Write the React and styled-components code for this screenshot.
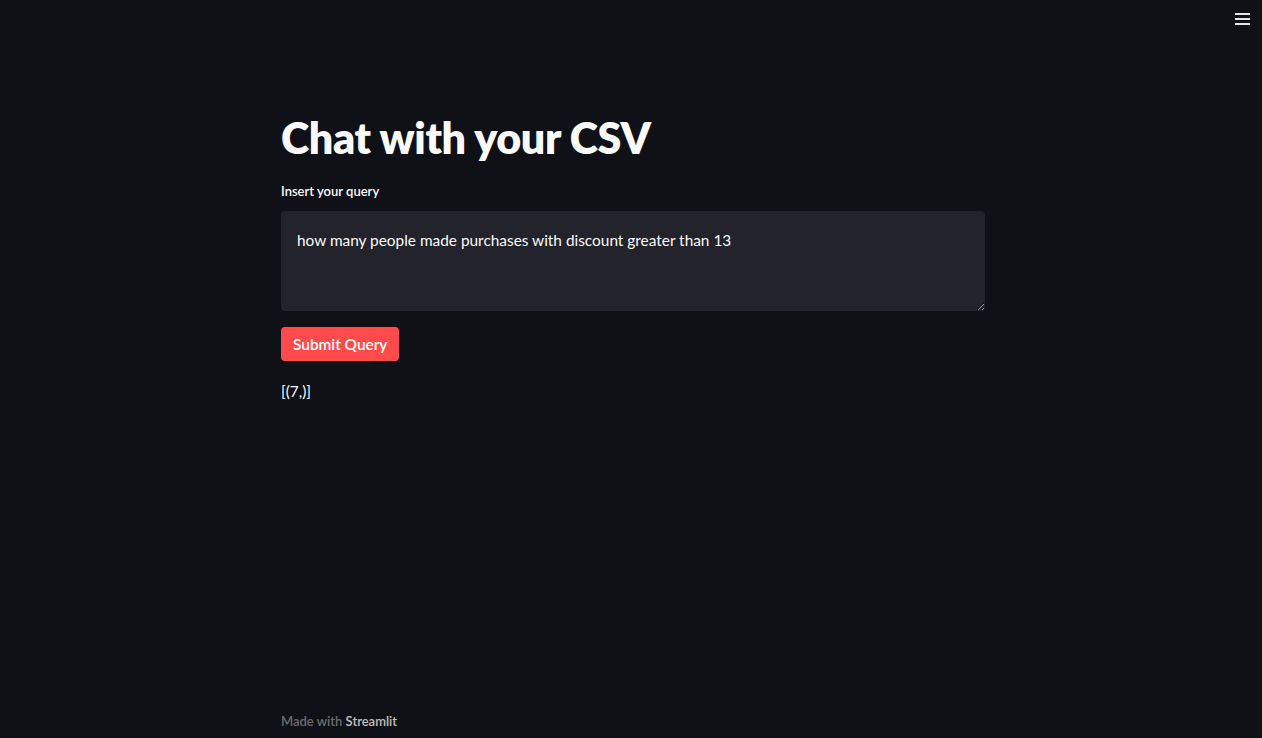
import React from "react"
import styled, { createGlobalStyle } from "styled-components"

const GlobalStyle = createGlobalStyle`
  html, body {
    margin: 0;
    padding: 0;
    background: #0f1116;
  }
  body {
    font-family: Lato, "Open Sans", sans-serif;
    color: #fafafa;
  }
`

export default function App() {
  return (
    <Page>
      <GlobalStyle />
      <Header>
        <MenuButton aria-label="menu">
          <span />
          <span />
          <span />
        </MenuButton>
      </Header>
      <Main>
        <Title>Chat with your CSV</Title>
        <Label>Insert your query</Label>
        <QueryBox defaultValue="how many people made purchases with discount greater than 13" />
        <SubmitButton>Submit Query</SubmitButton>
        <Result>[(7,)]</Result>
      </Main>
      <Footer>
        Made with <strong>Streamlit</strong>
      </Footer>
    </Page>
  )
}

const Page = styled.div`
  height: 738px;
  display: flex;
  flex-direction: column;
  background: #0f1116;
`

const Header = styled.div`
  height: 40px;
  display: flex;
  justify-content: flex-end;
  padding: 13px 12px 0 0;
  box-sizing: border-box;
`

const MenuButton = styled.div`
  width: 15px;
  height: 12px;
  display: flex;
  flex-direction: column;
  justify-content: space-between;
  span {
    display: block;
    height: 2px;
    background: #e6e6e6;
  }
`

const Column = styled.div`
  width: 704px;
  margin: 0 auto;
  position: relative;
  left: 2px;
`

const Main = styled(Column)`
  padding-top: 69px;
  flex: 1;
  display: flex;
  flex-direction: column;
  align-items: flex-start;
`

const Title = styled.h1`
  margin: 0;
  font-size: 43px;
  font-weight: 800;
  line-height: 58px;
  letter-spacing: -0.35px;
  color: #fafafa;
`

const Label = styled.label`
  margin-top: 15px;
  font-size: 13px;
  font-weight: 600;
  line-height: 18px;
  color: #fafafa;
`

const QueryBox = styled.textarea`
  margin-top: 11px;
  width: 100%;
  height: 100px;
  box-sizing: border-box;
  background: #22232b;
  border: none;
  border-radius: 4px;
  padding: 18px 16px;
  color: #fafafa;
  font-family: Lato, "Open Sans", sans-serif;
  font-size: 15.4px;
  line-height: 22px;
  outline: none;
  resize: vertical;
`

const SubmitButton = styled.button`
  margin-top: 16px;
  height: 34px;
  padding: 0 12px;
  background: #ff4b4b;
  border: none;
  border-radius: 4px;
  color: #ffffff;
  font-family: Lato, "Open Sans", sans-serif;
  font-size: 15.4px;
  font-weight: 600;
`

const Result = styled.p`
  margin: 19px 0 0;
  font-size: 15.4px;
  line-height: 22px;
  color: #fafafa;
`

const Footer = styled(Column)`
  padding-bottom: 9px;
  font-size: 13px;
  font-weight: 600;
  color: rgba(250, 250, 250, 0.4);
  strong {
    font-weight: 600;
    color: rgba(250, 250, 250, 0.75);
  }
`
